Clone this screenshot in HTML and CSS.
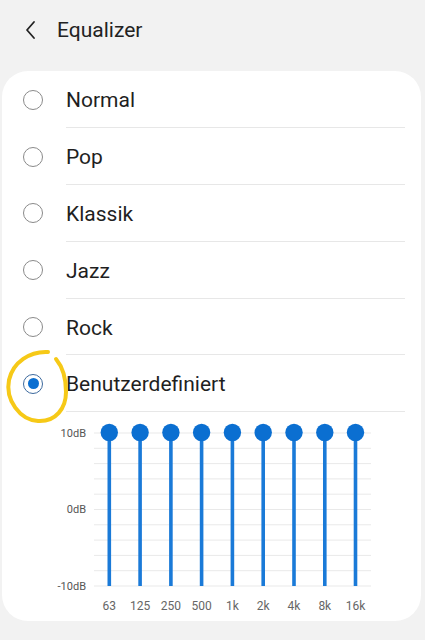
FILE: index.html
```html
<!DOCTYPE html>
<html lang="de">
<head>
<meta charset="utf-8">
<title>Equalizer</title>
<link rel="stylesheet" href="styles.css">
</head>
<body>
<div class="screen">
  <header class="header">
    <svg class="back" width="14" height="20" viewBox="0 0 14 20"><path d="M10 2 L3 10 L10 18" fill="none" stroke="#222" stroke-width="1.8" stroke-linecap="round" stroke-linejoin="round"/></svg>
    <h1 class="title">Equalizer</h1>
  </header>
  <main class="card">
    <ul class="presets">
      <li class="row"><span class="radio"></span><span class="label">Normal</span></li>
      <li class="row"><span class="radio"></span><span class="label">Pop</span></li>
      <li class="row"><span class="radio"></span><span class="label">Klassik</span></li>
      <li class="row"><span class="radio"></span><span class="label">Jazz</span></li>
      <li class="row"><span class="radio"></span><span class="label">Rock</span></li>
      <li class="row selected"><span class="radio on"><span class="dot"></span></span><span class="label">Benutzerdefiniert</span></li>
    </ul>
    <svg class="chart" width="419" height="209" viewBox="2 412 419 209">
      <g stroke="#e9e9e9" stroke-width="1">
        <line x1="94" x2="371" y1="433" y2="433"/>
        <line x1="94" x2="371" y1="448.3" y2="448.3"/>
        <line x1="94" x2="371" y1="463.6" y2="463.6"/>
        <line x1="94" x2="371" y1="478.9" y2="478.9"/>
        <line x1="94" x2="371" y1="494.2" y2="494.2"/>
        <line x1="94" x2="371" y1="509.5" y2="509.5"/>
        <line x1="94" x2="371" y1="524.8" y2="524.8"/>
        <line x1="94" x2="371" y1="540.1" y2="540.1"/>
        <line x1="94" x2="371" y1="555.4" y2="555.4"/>
        <line x1="94" x2="371" y1="570.7" y2="570.7"/>
        <line x1="94" x2="371" y1="586" y2="586"/>
      </g>
      <g fill="#555" font-family="Roboto, 'Noto Sans', sans-serif" font-size="11" text-anchor="end">
        <text x="86" y="437">10dB</text>
        <text x="86" y="513">0dB</text>
        <text x="86" y="590">-10dB</text>
      </g>
      <g stroke="#1a7ad8" stroke-width="3.6">
        <line x1="109.3" x2="109.3" y1="433" y2="586"/>
        <line x1="140.1" x2="140.1" y1="433" y2="586"/>
        <line x1="170.9" x2="170.9" y1="433" y2="586"/>
        <line x1="201.6" x2="201.6" y1="433" y2="586"/>
        <line x1="232.4" x2="232.4" y1="433" y2="586"/>
        <line x1="263.2" x2="263.2" y1="433" y2="586"/>
        <line x1="294" x2="294" y1="433" y2="586"/>
        <line x1="324.8" x2="324.8" y1="433" y2="586"/>
        <line x1="355.5" x2="355.5" y1="433" y2="586"/>
      </g>
      <g fill="#0b6fd1">
        <circle cx="109.3" cy="432.5" r="8.7"/>
        <circle cx="140.1" cy="432.5" r="8.7"/>
        <circle cx="170.9" cy="432.5" r="8.7"/>
        <circle cx="201.6" cy="432.5" r="8.7"/>
        <circle cx="232.4" cy="432.5" r="8.7"/>
        <circle cx="263.2" cy="432.5" r="8.7"/>
        <circle cx="294" cy="432.5" r="8.7"/>
        <circle cx="324.8" cy="432.5" r="8.7"/>
        <circle cx="355.5" cy="432.5" r="8.7"/>
      </g>
      <g fill="#666" font-family="Roboto, 'Noto Sans', sans-serif" font-size="12" text-anchor="middle">
        <text x="109.3" y="610">63</text>
        <text x="140.1" y="610">125</text>
        <text x="170.9" y="610">250</text>
        <text x="201.6" y="610">500</text>
        <text x="232.4" y="610">1k</text>
        <text x="263.2" y="610">2k</text>
        <text x="294" y="610">4k</text>
        <text x="324.8" y="610">8k</text>
        <text x="355.5" y="610">16k</text>
      </g>
    </svg>
  </main>
  <svg class="scribble" width="80" height="90" viewBox="0 345 80 90"><path d="M48 352 C 30 351, 13 362, 9 380 C 5 400, 20 420, 38 421 C 56 422, 66 408, 66 392 C 66 376, 61 365, 56 359" fill="none" stroke="#f6c917" stroke-width="4" stroke-linecap="round"/></svg>
</div>
</body>
</html>
```
FILE: styles.css
```css
* { box-sizing: border-box; }
html, body { margin: 0; padding: 0; }
body {
  background: #f2f2f2;
  font-family: Roboto, "Noto Sans", "Liberation Sans", sans-serif;
  color: #1f1f1f;
}
.screen {
  position: relative;
  width: 425px;
  height: 640px;
  overflow: hidden;
}
.header {
  height: 60px;
  display: flex;
  align-items: center;
  padding-left: 24px;
}
.back { display: block; }
.title {
  margin: 0 0 0 19px;
  font-size: 21px;
  font-weight: 400;
  color: #222;
}
.card {
  margin: 11px 4px 0 2px;
  height: 550px;
  background: #fff;
  border-radius: 26px;
  overflow: hidden;
}
.presets {
  list-style: none;
  margin: 0;
  padding: 0.5px 0 0;
}
.row {
  display: flex;
  height: 56.8px;
}
.radio {
  width: 20px;
  height: 20px;
  margin: auto 23px auto 21px;
  border: 1.2px solid #8a8a8a;
  border-radius: 50%;
  display: flex;
  align-items: center;
  justify-content: center;
  flex: none;
}
.radio.on { border-color: #3d6a9e; }
.dot {
  width: 11px;
  height: 11px;
  border-radius: 50%;
  background: #0b6fd1;
}
.label {
  flex: 1;
  display: flex;
  align-items: center;
  padding-top: 2px;
  margin-right: 16px;
  border-bottom: 1px solid #e7e7e7;
  font-size: 21px;
  color: #1f1f1f;
}
.chart { display: block; }
.scribble {
  position: absolute;
  left: 0;
  top: 345px;
}
```
